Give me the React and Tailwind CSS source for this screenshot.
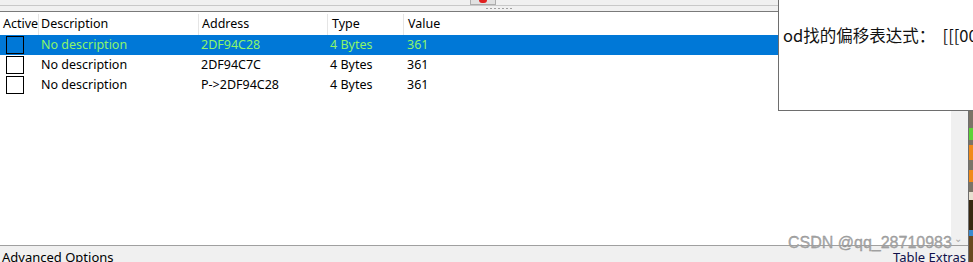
import React from "react";

const rows = [
  { desc: "No description", addr: "2DF94C28", type: "4 Bytes", val: "361", sel: true },
  { desc: "No description", addr: "2DF94C7C", type: "4 Bytes", val: "361" },
  { desc: "No description", addr: "P->2DF94C28", type: "4 Bytes", val: "361" },
];

export default function App() {
  return (
    <div
      className="relative w-[973px] h-[262px] overflow-hidden flex bg-[#f0f0f0] text-black"
      style={{ fontFamily: '"Noto Sans", "Noto Sans CJK SC", sans-serif' }}
    >
      {/* main window */}
      <div className="w-[968px] h-full flex flex-col">
        {/* top splitter area */}
        <div className="h-[5px] bg-[#f0f0f0] relative">
          <div className="absolute left-[470px] top-0 w-[26px] h-[5px] border border-t-0 border-[#adadad] bg-[#e1e1e1] flex justify-center">
            <div className="w-[8px] h-[3px] bg-[#e02020] rounded-b-sm" />
          </div>
        </div>
        <div className="h-px bg-[#c8c8c8]" />
        <div className="h-[5px] bg-[#f0f0f0] flex items-center justify-center">
          <div className="flex gap-[2px] ml-[30px]">
            {[0, 1, 2, 3, 4, 5, 6].map((i) => (
              <div key={i} className="w-[2px] h-px bg-[#a0a0a0]" />
            ))}
          </div>
        </div>
        <div className="h-px bg-[#7a7a7a]" />
        {/* list + scrollbar */}
        <div className="flex-1 flex min-h-0">
          <div className="w-[951px] bg-white text-[12.5px] leading-none">
            {/* header */}
            <div className="h-[23px] flex items-center pt-[2px]">
              <div className="w-[39px] pl-[3px] h-full flex items-center border-r border-[#e5e5e5]">Active</div>
              <div className="w-[160px] pl-[2px] h-full flex items-center border-r border-[#e5e5e5]">Description</div>
              <div className="w-[129px] pl-[3px] h-full flex items-center border-r border-[#e5e5e5]">Address</div>
              <div className="w-[76px] pl-[4px] h-full flex items-center border-r border-[#e5e5e5]">Type</div>
              <div className="flex-1 pl-[4px] h-full flex items-center">Value</div>
            </div>
            {rows.map((r, i) => (
              <div
                key={i}
                className={`h-[20px] flex items-center ${r.sel ? "bg-[#0078d7] text-[#8cf56a]" : "text-black"}`}
              >
                <div className="w-[40px] h-full flex items-center pl-[6px]">
                  <div className="w-[18px] h-[18px] border border-black bg-transparent" />
                </div>
                <div className="w-[160px] pl-[1px]">{r.desc}</div>
                <div className="w-[129px] pl-[1px]">{r.addr}</div>
                <div className="w-[77px] pl-[1px]">{r.type}</div>
                <div className="flex-1 pl-[1px]">{r.val}</div>
              </div>
            ))}
          </div>
          <div className="w-[17px] bg-[#f0f0f0] relative">
            <div className="absolute left-[3px] bottom-[2px] text-[#a8a8a8] text-[10px] leading-none">⌄</div>
          </div>
        </div>
        <div className="h-px bg-[#a0a0a0]" />
        {/* bottom bar */}
        <div className="h-[16px] bg-[#f0f0f0] flex justify-between text-[13px] leading-none pt-[5px]">
          <span className="pl-[2px]">Advanced Options</span>
          <span className="pr-[2px] text-[#10104a]">Table Extras</span>
        </div>
      </div>
      {/* right border + background strip */}
      <div className="w-px h-full bg-[#6e6e6e]" />
      <div className="w-[4px] h-full flex flex-col">
        <div className="h-[110px] bg-[#7b7466]" />
        <div className="h-[18px] bg-[#7b7466]" />
        <div className="h-[12px] bg-[#5dd238]" />
        <div className="h-[5px] bg-[#7b7466]" />
        <div className="h-[15px] bg-[#f08a1a]" />
        <div className="h-[10px] bg-[#7b7466]" />
        <div className="h-[12px] bg-[#f08a1a]" />
        <div className="h-[10px] bg-[#7b7466]" />
        <div className="h-[8px] bg-[#e8e0d0]" />
        <div className="h-[30px] bg-[#3a2810]" />
        <div className="h-[6px] bg-[#3a8ad0]" />
        <div className="flex-1 bg-[#6a4a20]" />
      </div>
      {/* popup */}
      <div className="absolute left-[778px] top-0 w-[200px] h-[111px] bg-white border-l border-b border-[#6e6e6e]">
        <div
          className="absolute left-[4px] top-[27px] text-[16.5px] leading-none whitespace-nowrap text-[#111]"
          style={{ fontFamily: '"Noto Sans CJK SC", sans-serif' }}
        >
          od找的偏移表达式：&nbsp;&nbsp;[[[00
        </div>
      </div>
      {/* watermark */}
      <div
        className="absolute left-[788px] top-[235px] text-[16px] leading-none text-[#a9a9a9] whitespace-nowrap"
        style={{ fontFamily: '"Liberation Sans", sans-serif', WebkitTextStroke: "0.3px #8a8a8a" }}
      >
        CSDN @qq_28710983
      </div>
    </div>
  );
}
